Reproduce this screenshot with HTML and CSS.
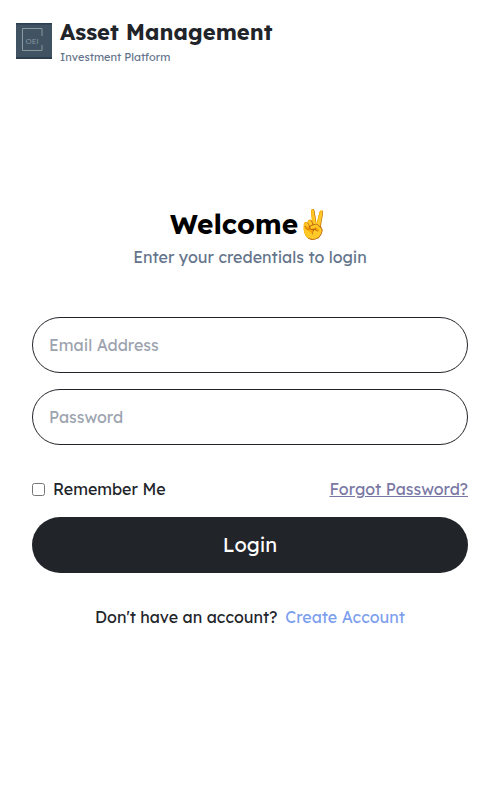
FILE: index.html
```html
<!DOCTYPE html>
<html lang="en">
<head>
<meta charset="utf-8">
<title>Asset Management</title>
<link rel="stylesheet" href="styles.css">
</head>
<body>
<header class="brand">
  <svg class="logo" viewBox="0 0 36 36" aria-hidden="true">
    <rect width="36" height="36" fill="#3f5363"/>
    <path d="M0 .5H36M0 35H36" stroke="#2d3d50" stroke-width="2"/>
    <path d="M26 13V5.5H6.5V27.5H26V22" fill="none" stroke="#8b999f" stroke-width="1"/>
    <text class="logo-text" x="9.5" y="21">OEI</text>
  </svg>
  <div class="brand-text">
    <div class="brand-name">Asset Management</div>
    <div class="brand-tag">Investment Platform</div>
  </div>
</header>
<main class="login">
  <h1 class="title">Welcome<span class="emoji">✌️</span></h1>
  <p class="subtitle">Enter your credentials to login</p>
  <form class="form">
    <input class="field" type="email" placeholder="Email Address">
    <input class="field" type="password" placeholder="Password">
    <div class="options">
      <label class="remember"><input class="check" type="checkbox">Remember Me</label>
      <a class="forgot" href="#">Forgot Password?</a>
    </div>
    <button class="submit" type="button">Login</button>
  </form>
  <p class="signup">Don't have an account?<a class="create" href="#">Create Account</a></p>
</main>
</body>
</html>
```

FILE: styles.css
```css
* { box-sizing: border-box; margin: 0; }
body {
  height: 800px;
  background: #fff;
  color: #212429;
  font: 400 16px/24px Lexend, "Noto Sans", sans-serif;
}
.brand { display: flex; align-items: center; gap: 8px; height: 82px; padding: 0 16px; }
.logo { width: 36px; height: 36px; flex: none; }
.logo-text { font: 400 8px "Open Sans", sans-serif; fill: #8b999f; }
.brand-text { padding-bottom: 2px; }
.brand-name { font-size: 22px; font-weight: 700; line-height: 33px; }
.brand-tag { font-size: 11px; line-height: 16px; color: #64748b; }
.login { padding: 121px 32px 0; }
.title { color: #000; font-size: 28px; font-weight: 700; line-height: 42px; text-align: center; }
.emoji { margin: 0 -1px 0 -2px; font-family: "Noto Color Emoji", Lexend, sans-serif; }
.subtitle { margin-top: -1px; text-align: center; color: #64748b; }
.form { display: flex; flex-direction: column; margin-top: 48px; }
.field {
  height: 56px;
  margin-bottom: 16px;
  padding: 0 16px;
  border: 1px solid #212429;
  border-radius: 28px;
  background: #fff;
  font: inherit;
}
.field::placeholder { color: #9ca3af; }
.options { display: flex; justify-content: space-between; margin: 16px 0; }
.remember { display: flex; align-items: center; gap: 8px; }
.check { width: 13px; height: 13px; }
.forgot { color: #7978a4; }
.submit {
  height: 56px;
  border: 0;
  border-radius: 28px;
  background: #212429;
  color: #fff;
  font: inherit;
  font-size: 20px;
}
.signup { display: flex; justify-content: center; gap: 8px; margin-top: 32px; }
.create { color: #7e9fee; text-decoration: none; }
```
